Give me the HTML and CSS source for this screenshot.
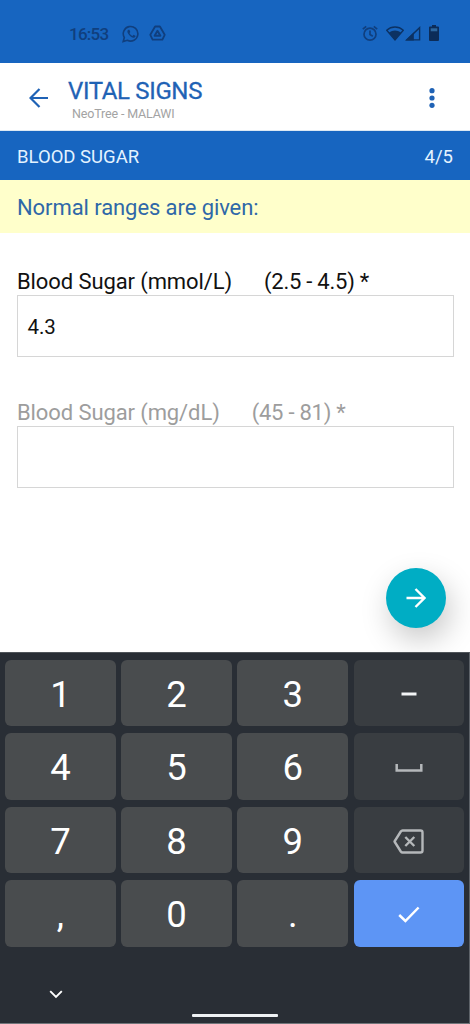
FILE: index.html
```html
<!DOCTYPE html>
<html lang="en">
<head>
<meta charset="utf-8">
<title>Vital Signs</title>
<link rel="stylesheet" href="styles.css">
</head>
<body>
<div class="phone">
  <div class="status">
    <span class="clock">16:53</span>
    <svg class="whatsapp" width="18" height="18" viewBox="0 0 18 18" fill="none" stroke="currentColor" stroke-width="1.6"><path d="M1.2 16.500l1.100-4A7.300 7.300 0 1 1 5.300 15.300z"/><path d="M6.300 4.700c-1.300.8-1.200 2.400.1 4.300 1.700 2.500 4.500 4.400 6.100 3.500 1-.6 1.200-1.400.9-1.700l-1.900-1-1 1.100c-1.300-.5-2.500-1.600-3-2.900l.8-1-.9-2.200z" fill="currentColor" stroke="none"/></svg>
    <svg class="drive" width="17" height="17" viewBox="0 0 17 17" fill="none" stroke="currentColor" stroke-width="1.8" stroke-linejoin="round"><path d="M6.100 1.500h4.800l4.800 8.300-2.300 4.800H3.600L1.300 9.800z"/><path d="M8.500 5.800l2.900 5H5.600z" stroke-width="1.900"/></svg>
    <span class="spacer"></span>
    <svg class="alarm" width="16" height="17" viewBox="0 0 16 17" fill="none" stroke="currentColor" stroke-width="1.700"><circle cx="8" cy="9.200" r="6"/><path d="M8 5.500v4l2.800 1.700M.8 4.200l3.400-2.900M15.200 4.200l-3.400-2.900"/></svg>
    <svg class="wifi" width="18" height="15" viewBox="0 0 18 15"><path d="M.7 4.200C5.500-.1 12.500-.1 17.300 4.200L9 14z" fill="none" stroke="currentColor" stroke-width="1.300"/><path d="M3 6.500c3.800-2.700 8.200-2.700 12 0L9 14z" fill="currentColor"/></svg>
    <svg class="signal" width="16" height="15" viewBox="0 0 16 15"><path d="M1.800 13.900H14.600V1.700z" fill="none" stroke="currentColor" stroke-width="1.400"/><path d="M.5 14.500L8.800 6.500v8z" fill="currentColor"/></svg>
    <svg class="battery" width="10" height="16" viewBox="0 0 10 16"><path d="M3 0h4v1.500h2A1 1 0 0 1 10 2.500V15a1 1 0 0 1-1 1H1a1 1 0 0 1-1-1V2.500a1 1 0 0 1 1-1h2z" fill="currentColor"/><path d="M1.700 3.300h6.600v3H1.700z" class="battery-gap"/></svg>
  </div>

  <header class="appbar">
    <svg class="back" width="20" height="20" viewBox="0 0 20 20" fill="none" stroke="currentColor" stroke-width="2.200"><path d="M19 10H2M10.500 1L1.500 10l9 9"/></svg>
    <div class="titles">
      <h1 class="title">VITAL SIGNS</h1>
      <div class="subtitle">NeoTree - MALAWI</div>
    </div>
    <svg class="more" width="6" height="22" viewBox="0 0 6 22" fill="currentColor"><circle cx="3" cy="3.700" r="2.600"/><circle cx="3" cy="11" r="2.600"/><circle cx="3" cy="18.300" r="2.600"/></svg>
  </header>

  <div class="section"><span class="section-name">BLOOD SUGAR</span><span class="step">4/5</span></div>
  <div class="notice"><span class="notice-text">Normal ranges are given:</span></div>

  <main class="form">
    <div class="field">
      <div class="label"><span class="name">Blood Sugar (mmol/L)</span><span class="range">(2.5 - 4.5) *</span></div>
      <div class="input">4.3</div>
    </div>
    <div class="field muted">
      <div class="label"><span class="name">Blood Sugar (mg/dL)</span><span class="range">(45 - 81) *</span></div>
      <div class="input"></div>
    </div>
    <div class="fab"><svg width="20" height="20" viewBox="0 0 20 20" fill="none" stroke="currentColor" stroke-width="2.400"><path d="M.5 10H18M9.500 1l9 9-9 9"/></svg></div>
  </main>

  <div class="keyboard">
    <div class="keys">
      <div class="key">1</div><div class="key">2</div><div class="key">3</div>
      <div class="key side"><svg width="16" height="4" viewBox="0 0 16 4"><path d="M.5 .5h15v3H.5z" fill="#f3f5f6"/></svg></div>
      <div class="key">4</div><div class="key">5</div><div class="key">6</div>
      <div class="key side"><svg width="28" height="8" viewBox="0 0 28 8" fill="none" stroke="currentColor" stroke-width="2.500"><path d="M1.700 0v6.400h24.600V0"/></svg></div>
      <div class="key">7</div><div class="key">8</div><div class="key">9</div>
      <div class="key side"><svg width="31" height="25" viewBox="0 0 31 25" fill="none" stroke="currentColor" stroke-width="2.400" stroke-linejoin="round"><path d="M9.500 1.500H27.500Q29.500 1.500 29.500 3.500V21.500Q29.500 23.500 27.500 23.500H9.500Q8.500 23.500 7.800 22.500L1.500 12.500 7.800 2.500Q8.500 1.500 9.500 1.500z"/><path d="M12.300 8l9 9M21.300 8l-9 9"/></svg></div>
      <div class="key">,</div><div class="key">0</div><div class="key">.</div>
      <div class="key enter"><svg width="22" height="17" viewBox="0 0 22 17" fill="none" stroke="currentColor" stroke-width="2.500"><path d="M1.200 9l6.200 6L20.600 1.500"/></svg></div>
    </div>
    <div class="nav">
      <svg class="hide" width="14" height="9" viewBox="0 0 14 9" fill="none" stroke="currentColor" stroke-width="1.900"><path d="M1.200 1.200L7 7l5.800-5.800"/></svg>
      <span class="home"></span>
    </div>
  </div>
</div>
</body>
</html>
```
FILE: styles.css
```css
* { box-sizing: border-box; }
body { margin: 0; font-family: Roboto, "Liberation Sans", sans-serif; background: #fff; }
svg { display: block; flex: none; }
.phone { width: 470px; height: 1024px; display: flex; flex-direction: column; overflow: hidden; }

.status { height: 63px; flex: none; display: flex; align-items: flex-start; padding: 25px 31px 0 69px; background: #1765c0; color: #103f7e; }
.clock { font-size: 17px; line-height: 19px; font-weight: 500; letter-spacing: -.75px; width: 53px; white-space: nowrap; }
.drive { margin-left: 9px; }
.spacer { flex: 1; }
.wifi { margin-left: 8px; margin-top: 1px; color: #0c3263; }
.signal { margin-left: 1px; margin-top: 1px; color: #0c3263; }
.battery { margin-left: 8px; color: #0c2c58; }
.battery-gap { fill: #2d679f; }

.appbar { height: 68px; flex: none; display: flex; align-items: flex-start; padding: 0 35px 0 29px; background: #fff; color: #1f62b5; border-bottom: 1px solid #dce8f3; }
.back { margin-top: 25px; }
.titles { flex: 1; margin-left: 19px; padding-top: 14px; }
.title { margin: 0; font-size: 24px; line-height: 28px; font-weight: 400; letter-spacing: -.35px; -webkit-text-stroke: .3px currentColor; }
.subtitle { margin-left: 4px; font-size: 12.500px; letter-spacing: -.15px; line-height: 16px; margin-top: 1px; color: #a3a3a3; }
.more { margin-top: 24px; }

.section { height: 49px; flex: none; display: flex; align-items: center; justify-content: space-between; padding: 2px 17px 0; background: #1765c0; color: #e4f3ff; font-size: 18.500px; }
.notice { height: 53px; flex: none; display: flex; align-items: center; padding: 2px 17px 0; background: #ffffcb; color: #2f68a8; font-size: 22px; letter-spacing: -.08px; }

.form { height: 419px; flex: none; padding: 37px 16px 0 17px; display: flex; flex-direction: column; }
.field { height: 131px; flex: none; }
.label { height: 25px; display: flex; font-size: 22px; line-height: 24px; color: #111; white-space: nowrap; letter-spacing: -.1px; }
.range { margin-left: 32px; letter-spacing: -.25px; }
.input { height: 62px; border: 1px solid #d6d6d6; padding: 0 9.500px; font-size: 20.500px; line-height: 62px; letter-spacing: -.1px; color: #111; }
.muted .label { color: #9d9d9d; }
.fab { align-self: flex-end; margin: 36px 8px 0 0; width: 60px; height: 60px; flex: none; border-radius: 50%; background: #00adc4; color: #fff; display: flex; align-items: center; justify-content: center; box-shadow: 4px 12px 30px rgba(0,0,0,.22); }

.keyboard { position: relative; height: 372px; flex: none; background: #292e35; border-top: 1px solid #50555a; border-right: 1px solid #5e6369; border-bottom: 1px solid #70757a; padding: 7px 4px 0 5px; }
.keys { display: grid; grid-template-columns: repeat(4, 110.800px); grid-auto-rows: 66.400px; column-gap: 5.400px; row-gap: 7.100px; }
.key { display: flex; align-items: center; justify-content: center; border-radius: 6px; background: #494c4e; color: #fff; font-size: 36.500px; line-height: 40px; padding-top: 3px; }
.side { background: #393d41; color: #b5b8ba; padding-top: 2px; }
.enter { background: #5d95f5; color: #fff; padding-top: 1px; }
.nav { height: 76px; display: grid; grid-template-columns: 187px 86px; align-items: start; color: #fff; }
.hide { margin: 43px 0 0 44px; }
.home { height: 3px; margin-top: 67px; background: #eff2f4; border-radius: 1px; }
```
